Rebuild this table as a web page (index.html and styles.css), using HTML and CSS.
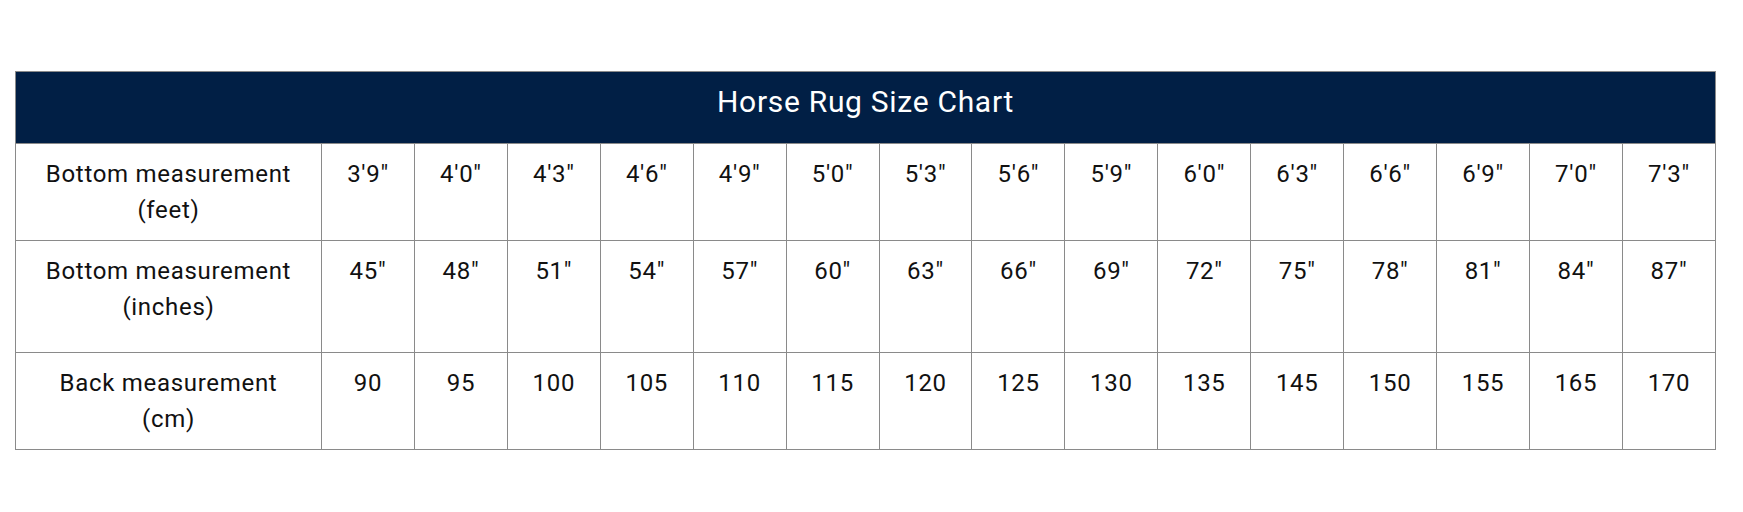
FILE: index.html
```html
<!DOCTYPE html>
<html>
<head>
<meta charset="utf-8">
<link rel="stylesheet" href="styles.css">
</head>
<body>
<div class="page">
<table class="chart">
  <colgroup>
    <col class="col-label">
    <col span="15">
  </colgroup>
  <thead>
    <tr><th colspan="16" class="title">Horse Rug Size Chart</th></tr>
  </thead>
  <tbody>
    <tr>
      <td>Bottom measurement<br>(feet)</td>
      <td>3'9"</td><td>4'0"</td><td>4'3"</td><td>4'6"</td><td>4'9"</td><td>5'0"</td><td>5'3"</td><td>5'6"</td><td>5'9"</td><td>6'0"</td><td>6'3"</td><td>6'6"</td><td>6'9"</td><td>7'0"</td><td>7'3"</td>
    </tr>
    <tr class="tall">
      <td>Bottom measurement<br>(inches)</td>
      <td>45"</td><td>48"</td><td>51"</td><td>54"</td><td>57"</td><td>60"</td><td>63"</td><td>66"</td><td>69"</td><td>72"</td><td>75"</td><td>78"</td><td>81"</td><td>84"</td><td>87"</td>
    </tr>
    <tr>
      <td>Back measurement<br>(cm)</td>
      <td>90</td><td>95</td><td>100</td><td>105</td><td>110</td><td>115</td><td>120</td><td>125</td><td>130</td><td>135</td><td>145</td><td>150</td><td>155</td><td>165</td><td>170</td>
    </tr>
  </tbody>
</table>
</div>
</body>
</html>
```
FILE: styles.css
```css
html, body {
  margin: 0;
  padding: 0;
  background: #ffffff;
}
.page {
  padding: 71px 0 0 15px;
}
.chart {
  border-collapse: collapse;
  table-layout: fixed;
  width: 1701px;
  font-family: Roboto, "Liberation Sans", sans-serif;
  color: #111111;
}
.col-label {
  width: 306px;
}
.chart th, .chart td {
  border: 1px solid #8a8a8a;
  text-align: center;
  vertical-align: top;
  padding: 0;
}
.chart .title {
  background: #011f45;
  color: #ffffff;
  font-weight: 400;
  font-size: 30px;
  line-height: 36px;
  letter-spacing: 0.7px;
  padding: 12px 0 23px;
  height: 36px;
}
.chart td {
  font-size: 24px;
  line-height: 36px;
  letter-spacing: 0.7px;
  padding: 12px 0 12px;
  height: 72px;
}
.chart tr.tall td {
  padding-bottom: 27px;
}
```
